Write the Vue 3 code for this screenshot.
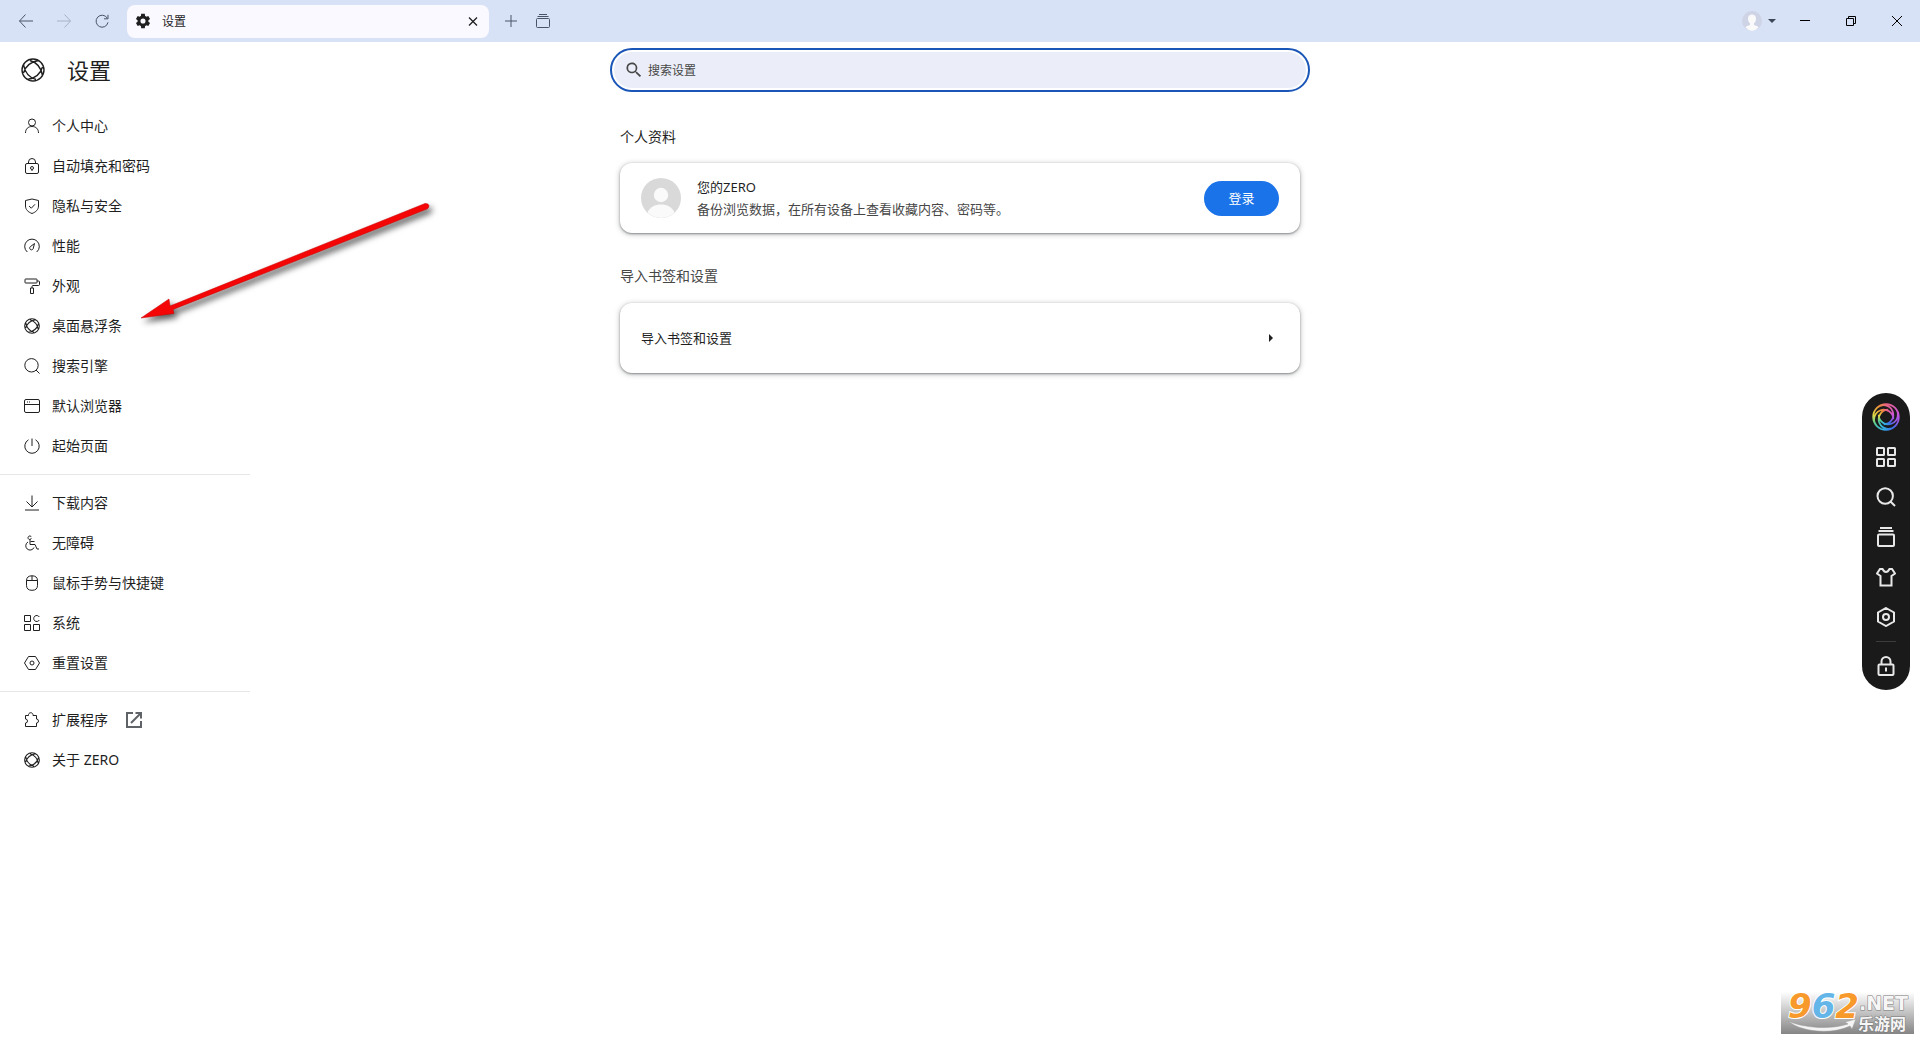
<template>
  <div class="browser">
    <header class="title-bar">
      <div class="nav-buttons">
        <button class="bar-button" aria-label="后退">
          <svg class="icon-16" viewBox="0 0 16 16"><path d="M15 8H1.500M7.500 1.500L1.500 8l6 6.500" /></svg>
        </button>
        <button class="bar-button disabled" aria-label="前进">
          <svg class="icon-16" viewBox="0 0 16 16"><path d="M1 8h13.500M8.500 1.500l6 6.500-6 6.500" /></svg>
        </button>
        <button class="bar-button" aria-label="刷新">
          <svg class="icon-16" viewBox="0 0 16 16"><path d="M13.300 5.200A6 6 0 1 0 14 9.300M14 1.800v4h-4" /></svg>
        </button>
      </div>
      <div class="tab">
        <svg class="icon-16 gear" viewBox="1 1 22 22">
          <path d="M19.400 13a7.500 7.500 0 0 0 0-2l2.300-1.800-2.400-4.100-2.700 1.100a8 8 0 0 0-1.700-1L14.500 2h-5l-.4 3.200a8 8 0 0 0-1.700 1L4.700 5.100 2.300 9.200 4.600 11a7.500 7.500 0 0 0 0 2l-2.300 1.800 2.400 4.100 2.700-1.100a8 8 0 0 0 1.700 1l.4 3.200h5l.4-3.200a8 8 0 0 0 1.700-1l2.700 1.100 2.400-4.100zM12 15.500a3.500 3.500 0 1 1 0-7 3.500 3.500 0 0 1 0 7z" />
        </svg>
        <span class="tab-title">设置</span>
        <button class="tab-close" aria-label="关闭标签页">
          <svg class="icon-16" viewBox="0 0 16 16"><path d="M4 4.500l8 8M12 4.500l-8 8" /></svg>
        </button>
      </div>
      <div class="tab-actions">
        <button class="bar-button small" aria-label="新标签页">
          <svg class="icon-16" viewBox="0 0 16 16"><path d="M8 2v12M2 8h12" /></svg>
        </button>
        <button class="bar-button small" aria-label="标签页列表">
          <svg class="icon-16" viewBox="0 0 16 16"><path d="M4 1.500h8M2.500 3.500h11M2.500 5.500h11q1 0 1 1v7q0 1-1 1h-11q-1 0-1-1v-7q0-1 1-1z" /></svg>
        </button>
      </div>
      <button class="profile" aria-label="用户">
        <svg class="icon-20" viewBox="0 0 20 20">
          <circle cx="10" cy="10" r="10" fill="#cfd3e6" />
          <path d="M10 3.500c-2.600 0-4 1.800-4 4.300 0 2 .8 3.700 2 4.500v1.600c-2 .5-3.600 1.200-4.600 2.300A9.500 9.500 0 0 0 10 20a9.500 9.500 0 0 0 6.600-3.800c-1-1.100-2.600-1.800-4.600-2.300v-1.600c1.200-.8 2-2.500 2-4.500 0-2.500-1.400-4.300-4-4.300z" fill="#f8f9fd" />
        </svg>
        <span class="caret"></span>
      </button>
      <div class="window-buttons">
        <button aria-label="最小化"><svg class="icon-10" viewBox="0 0 10 10"><path d="M0 4.500h10" /></svg></button>
        <button aria-label="还原"><svg class="icon-10" viewBox="0 0 10 10"><path d="M.5 2.500h7v7h-7zM2.500 2.500v-2h7v7h-2" /></svg></button>
        <button aria-label="关闭"><svg class="icon-10" viewBox="0 0 10 10"><path d="M0 0l10 10M10 0L0 10" /></svg></button>
      </div>
    </header>

    <div class="page">
      <aside class="sidebar">
        <div class="brand">
          <svg class="icon-24" viewBox="-12 -12 24 24">
            <path :d="logoPath" stroke-width="1.400" />
          </svg>
          <h1>设置</h1>
        </div>
        <nav>
          <ul v-for="(group, index) in menuGroups" :key="index" class="menu-group">
            <li v-for="item in group" :key="item.label">
              <a href="#" class="menu-item">
                <svg v-if="item.icon === 'logo'" class="icon-16" viewBox="-12 -12 24 24"><path :d="logoPath" stroke-width="1.600" /></svg>
                <svg v-else class="icon-16" viewBox="0 0 16 16"><path :d="icons[item.icon]" /></svg>
                <span>{{ item.label }}</span>
                <svg v-if="item.external" class="icon-16 external" viewBox="0 0 16 16">
                  <path d="M7 1H1v14h14V9M9.500 1H15v5.500M15 1L5 11" />
                </svg>
              </a>
            </li>
          </ul>
        </nav>
      </aside>

      <main class="content">
        <label class="search">
          <svg class="icon-20 search-icon" viewBox="0 0 24 24">
            <path d="M15.500 14h-.8l-.3-.3A6.500 6.500 0 1 0 13.700 14.400l.3.300v.8l5 5 1.500-1.500zM9.500 14a4.500 4.500 0 1 1 0-9 4.500 4.500 0 0 1 0 9z" />
          </svg>
          <input v-model="keyword" type="search" placeholder="搜索设置" aria-label="搜索设置" />
        </label>

        <section>
          <h2>个人资料</h2>
          <div class="card">
            <svg class="icon-40" viewBox="0 0 40 40">
              <circle cx="20" cy="20" r="20" fill="#d9d9d9" />
              <circle cx="20" cy="17" r="7.200" fill="#fafafa" />
              <path d="M6.500 34.500C9 29 14 26.500 20 26.500S31 29 33.500 34.500A20 20 0 0 1 20 40 20 20 0 0 1 6.500 34.500z" fill="#fafafa" />
            </svg>
            <div class="profile-text">
              <div>您的ZERO</div>
              <div class="secondary">备份浏览数据，在所有设备上查看收藏内容、密码等。</div>
            </div>
            <button class="login">登录</button>
          </div>
        </section>

        <section>
          <h2 class="secondary">导入书签和设置</h2>
          <button class="card link-card">
            <span>导入书签和设置</span>
            <span class="arrow-right"></span>
          </button>
        </section>
      </main>
    </div>

    <svg class="pointer" viewBox="0 0 310 140">
      <path d="M11 128L39 109l1 7L295 13.500q3-.5 4 2 0 2.500-2 3.500L43 119.500l1 4z" />
    </svg>

    <div class="float-bar">
      <button aria-label="ZERO">
        <svg class="icon-28" viewBox="-12 -12 24 24">
          <mask id="ring" maskUnits="userSpaceOnUse" x="-12" y="-12" width="24" height="24">
            <path :d="swirlPath" stroke="#fff" />
          </mask>
          <foreignObject x="-12" y="-12" width="24" height="24" mask="url(#ring)">
            <div class="rainbow"></div>
          </foreignObject>
        </svg>
      </button>
      <button v-for="tool in tools" :key="tool.icon" :aria-label="tool.label">
        <svg class="icon-20" viewBox="0 0 20 20"><path :d="toolIcons[tool.icon]" /></svg>
      </button>
      <hr />
      <button aria-label="锁定">
        <svg class="icon-20" viewBox="0 0 20 20"><path :d="toolIcons.lock" /></svg>
      </button>
    </div>

    <svg class="watermark" viewBox="0 0 133 42">
      <defs>
        <linearGradient id="plate" x1="0" y1="0" x2="0" y2="1">
          <stop offset="0" stop-color="#fff" />
          <stop offset="1" stop-color="#858585" />
        </linearGradient>
      </defs>
      <rect width="133" height="42" fill="url(#plate)" />
      <path class="swoosh" d="M7 29c16 7 42 9 60 3l-3-2 11-3-4 10-2-3C50 43 20 40 7 29z" />
      <text class="digits" x="7" y="26">
        <tspan class="orange">9</tspan><tspan class="blue">6</tspan><tspan class="orange">2</tspan>
      </text>
      <text class="net" x="78" y="18">.NET</text>
      <text class="site" x="77" y="38">乐游网</text>
    </svg>
  </div>
</template>

<script setup>
import { ref } from 'vue';

const keyword = ref('');

// outer ring with four crossing blades
const logoPath =
  'M-11 0a11 11 0 1 0 22 0a11 11 0 1 0-22 0' +
  'M5.500-9.500Q-6.500-7.500-9.500 3' +
  'M9.500 5.500Q7.500-6.500-3-9.500' +
  'M-5.500 9.500Q6.500 7.500 9.500-3' +
  'M-9.500-5.500Q-7.500 6.500 3 9.500';

// same ring with blades winding round the centre
const swirlPath =
  'M-11 0a11 11 0 1 0 22 0a11 11 0 1 0-22 0' +
  'M7.750 7.750A8.200 8.200 0 1 1 1.950-6.250' +
  'M-7.750 7.750A8.200 8.200 0 1 1 6.250 1.950' +
  'M-7.750-7.750A8.200 8.200 0 1 1-1.950 6.250' +
  'M7.750-7.750A8.200 8.200 0 1 1-6.250-1.950';

const menuGroups = [
  [
    { icon: 'user', label: '个人中心' },
    { icon: 'lock', label: '自动填充和密码' },
    { icon: 'shield', label: '隐私与安全' },
    { icon: 'gauge', label: '性能' },
    { icon: 'roller', label: '外观' },
    { icon: 'logo', label: '桌面悬浮条' },
    { icon: 'search', label: '搜索引擎' },
    { icon: 'window', label: '默认浏览器' },
    { icon: 'power', label: '起始页面' },
  ],
  [
    { icon: 'download', label: '下载内容' },
    { icon: 'wheelchair', label: '无障碍' },
    { icon: 'mouse', label: '鼠标手势与快捷键' },
    { icon: 'grid', label: '系统' },
    { icon: 'hexagon', label: '重置设置' },
  ],
  [
    { icon: 'puzzle', label: '扩展程序', external: true },
    { icon: 'logo', label: '关于 ZERO' },
  ],
];

const icons = {
  user: 'M4.500 4.500a3.500 3.500 0 1 0 7 0a3.500 3.500 0 1 0-7 0M1.500 15C1.500 11 4 8.500 8 8.500S14.500 11 14.500 15',
  lock: 'M4.500 5.500V4a3.500 3.500 0 0 1 7 0v1.500M3 5.500h10q1.500 0 1.500 1.500v7q0 1.500-1.500 1.500H3q-1.500 0-1.500-1.500V7q0-1.500 1.500-1.500zM6.500 10a1.500 1.500 0 1 1 3 0a1.500 1.500 0 1 1-3 0M8 11.500v1.500',
  shield: 'M8 1l6.500 1.500v5.500c0 3.500-2.500 6-6.500 7.500-4-1.500-6.500-4-6.500-7.500V2.500zM5 8l2.300 2.200L11 6.300',
  gauge: 'M3.300 14A7.300 7.300 0 1 1 12.700 14M10.500 5.500L6.300 8.700A1.800 1.800 0 1 0 9.300 10z',
  roller: 'M1.500 1h11q.5 0 .5.500v3q0 .5-.5.500h-11q-.5 0-.5-.5v-3Q1 1 1.500 1zM13 3h1.500q1 0 1 1v2.500q0 1-1 1H9q-1 0-1 1V10M6.500 10h3v5.500h-3z',
  search: 'M.8 7.300a6.700 6.700 0 1 0 13.400 0a6.700 6.700 0 1 0-13.400 0M12 12l3.500 3.500',
  window: 'M2 1.500h12q1.500 0 1.500 1.500v10q0 1.500-1.500 1.500H2Q.5 14.500.5 13V3Q.5 1.500 2 1.500zM.5 6.500h15M3 4h1M5 4h1',
  power: 'M8 .5v7.500M4.500 1.800a7.200 7.200 0 1 0 7 0',
  download: 'M8 .5v11M2.500 6.500L8 12l5.500-5.500M1 15h14',
  wheelchair: 'M7.300 3.300a1.700 1.700 0 1 1-2.500-2q1-1 2.500.3M6 4v5.500h5l2 4.500h2M6.500 6.500h4M4 7a4.300 4.300 0 1 0 6 5.500',
  mouse: 'M8 .8q5.500 0 5.500 5v4.500q0 5-5.500 5t-5.500-5V5.800q0-5 5.500-5zM8 .8v5M2.500 5.500h11',
  grid: 'M.5.5h6v6h-6zM.5 9.500h6v6h-6zM9.500 9.500h6v6h-6zM15.300 2A3 3 0 1 0 15.300 5',
  hexagon: 'M4.500 1.500h7L15.500 8l-4 6.500h-7L.5 8zM6 8a2 2 0 1 0 4 0a2 2 0 1 0-4 0',
  puzzle: 'M1.500 3.500h3a2.300 2.300 0 1 1 4.500 0H12.500v3.500a2 2 0 1 1 0 4v3.500h-11v-3.500a2 2 0 0 0 0-4z',
};

const tools = [
  { icon: 'apps', label: '应用' },
  { icon: 'search', label: '搜索' },
  { icon: 'stack', label: '标签页' },
  { icon: 'shirt', label: '皮肤' },
  { icon: 'hexagon', label: '设置' },
];

const toolIcons = {
  apps: 'M1.500 1h6q.5 0 .5.500v6q0 .5-.5.500h-6Q1 8 1 7.500v-6Q1 1 1.500 1zM12.500 1h6q.5 0 .5.500v6q0 .5-.5.500h-6q-.5 0-.5-.5v-6q0-.5.5-.5zM1.500 12h6q.5 0 .5.500v6q0 .5-.5.500h-6q-.5 0-.5-.5v-6q0-.5.5-.5zM12.500 12h6q.5 0 .5.500v6q0 .5-.5.500h-6q-.5 0-.5-.5v-6q0-.5.5-.5z',
  search: 'M1.500 9a7.700 7.700 0 1 0 15.400 0a7.700 7.700 0 1 0-15.400 0M14.500 14.500l4.500 4.500',
  stack: 'M4 1h12M2.500 4h15M3 7.500h14q1 0 1 1V18q0 1-1 1H3q-1 0-1-1V8.500q0-1 1-1z',
  shirt: 'M6.500 2q1.500 3 3.500 3t3.500-3L16 2l3 4.500-3.500 2.500V18.500h-11V9L1 6.500 4 2z',
  hexagon: 'M10 1l8 4.500v9L10 19l-8-4.500v-9zM7 10a3 3 0 1 0 6 0a3 3 0 1 0-6 0',
  lock: 'M5.500 8.500V5.500a4.500 4.500 0 0 1 9 0v3M3.500 8.500h13q1 0 1 1V18q0 1-1 1h-13q-1 0-1-1V9.500q0-1 1-1zM10 11.500v4',
};
</script>

<style>
body {
  margin: 0;
  background: #fff;
}
</style>

<style scoped>
.browser {
  position: relative;
  min-height: 100vh;
  font-family: "Noto Sans", "Noto Sans CJK SC", sans-serif;
  font-size: 14px;
  line-height: 20px;
  color: #1f1f1f;
}

button {
  padding: 0;
  border: none;
  background: none;
  font: inherit;
  color: inherit;
}

svg {
  display: block;
  flex: none;
}

path {
  fill: none;
  stroke: currentColor;
}

.icon-10 {
  width: 10px;
  height: 10px;
}

.icon-16 {
  width: 16px;
  height: 16px;
}

.icon-20 {
  width: 20px;
  height: 20px;
}

.icon-24 {
  width: 24px;
  height: 24px;
}

.icon-28 {
  width: 28px;
  height: 28px;
}

.icon-40 {
  width: 40px;
  height: 40px;
}

.icon-20 path[fill],
.icon-40 path {
  fill: #fafafa;
  stroke: none;
}

/* title bar */
.title-bar {
  display: flex;
  align-items: center;
  height: 42px;
  background: #d8e2f6;
}

.nav-buttons {
  display: flex;
  padding: 0 6px 0 7px;
}

.bar-button {
  display: flex;
  align-items: center;
  justify-content: center;
  width: 38px;
  height: 32px;
  color: #4a5468;
}

.bar-button.small {
  width: 32px;
}

.bar-button.disabled {
  color: #a9b2c3;
}

.tab {
  display: flex;
  align-items: center;
  gap: 11px;
  width: 362px;
  height: 33px;
  padding: 0 8px;
  box-sizing: border-box;
  border-radius: 8px;
  background: #faf9ff;
  font-size: 12px;
}

.gear path {
  fill: #1f1f1f;
  stroke: none;
}

.tab-title {
  flex: 1;
  padding-top: 1px;
}

.tab-close path {
  stroke-width: 1.3;
}

.tab-actions {
  display: flex;
  flex: 1;
  padding-left: 6px;
}

.profile {
  display: flex;
  align-items: center;
  gap: 6px;
  margin-right: 6px;
}

.caret {
  border: 4px solid transparent;
  border-top-color: #3c4658;
  border-bottom: none;
}

.window-buttons {
  display: flex;
}

.window-buttons button {
  display: flex;
  align-items: center;
  justify-content: center;
  width: 46px;
  height: 42px;
  color: #000;
}

/* page */
.page {
  display: grid;
  grid-template-columns: 250px minmax(0, 1fr) 250px;
}

.brand {
  display: flex;
  align-items: center;
  gap: 22px;
  height: 56px;
  padding: 0 21px 8px;
}

.brand h1 {
  margin: 0;
  font-size: 22px;
  line-height: 32px;
  font-weight: 400;
}

.menu-group {
  margin: 0;
  padding: 0;
  list-style: none;
}

.menu-group + .menu-group {
  margin-top: 8px;
  padding-top: 8px;
  border-top: 1px solid #e6e6e6;
}

.menu-item {
  display: flex;
  align-items: center;
  gap: 12px;
  height: 40px;
  padding-left: 24px;
  color: inherit;
  text-decoration: none;
}

.external {
  margin-left: 6px;
  color: #5f6368;
}

.external path {
  stroke-width: 2;
}

.content {
  width: 100%;
  max-width: 680px;
  margin: 0 auto;
}

.search {
  display: flex;
  align-items: center;
  gap: 4px;
  height: 36px;
  margin: 6px -10px 0;
  padding: 2px 12px;
  border: 2px solid #1a56b8;
  border-radius: 22px;
  background: #ebeef8;
  box-shadow: inset 0 0 0 2px #fff;
  color: #474747;
}

.search-icon path {
  fill: #474747;
  stroke: none;
}

.search input {
  flex: 1;
  min-width: 0;
  padding: 1px 0 0;
  border: none;
  outline: none;
  background: transparent;
  font: inherit;
  font-size: 12px;
}

.search input::placeholder {
  color: #474747;
}

section h2 {
  margin: 0;
  padding: 35px 0 16px;
  font-size: 14px;
  line-height: 20px;
  font-weight: 400;
}

section + section h2 {
  padding: 33px 0 17px;
}

.secondary {
  color: #474747;
}

.card {
  display: flex;
  align-items: center;
  gap: 16px;
  width: 100%;
  min-height: 70px;
  padding: 0 21px;
  box-sizing: border-box;
  border-radius: 12px;
  background: #fff;
  box-shadow: 0 1px 2px rgba(60, 64, 67, 0.5), 0 1px 5px 1px rgba(60, 64, 67, 0.25);
  font-size: 13px;
}

.profile-text {
  flex: 1;
  line-height: 22px;
}

.login {
  width: 75px;
  height: 35px;
  border-radius: 18px;
  background: #1a73e8;
  color: #fff;
}

.link-card {
  justify-content: space-between;
  padding-right: 27px;
}

.arrow-right {
  border: 4px solid transparent;
  border-left-color: #1f1f1f;
  border-right: none;
}

/* overlays */
.pointer {
  position: absolute;
  left: 130px;
  top: 190px;
  width: 310px;
  height: 140px;
  overflow: visible;
  pointer-events: none;
  filter: drop-shadow(3px 4px 3px rgba(0, 0, 0, 0.65));
}

.pointer path {
  fill: #f40606;
  stroke: #c80000;
  stroke-width: 0.5;
}

.float-bar {
  position: absolute;
  top: 393px;
  right: 10px;
  display: flex;
  flex-direction: column;
  align-items: center;
  width: 48px;
  padding: 4px 0;
  box-sizing: border-box;
  border-radius: 24px;
  background: #1a1a1a;
  color: #e8e8e8;
}

.float-bar button {
  display: flex;
  align-items: center;
  justify-content: center;
  width: 40px;
  height: 40px;
}

.float-bar path {
  stroke-width: 2;
}

.float-bar mask path {
  stroke-width: 1.5;
}

.float-bar hr {
  width: 20px;
  margin: 4px 0;
  border: none;
  border-top: 1px solid #3c3c3c;
}

.rainbow {
  width: 24px;
  height: 24px;
  background: conic-gradient(#ff6a8a, #e05ce8 70deg, #a55cff 110deg, #3d7bff 150deg, #35c8f5 200deg, #5fe0a0 240deg, #f7ee4a 280deg, #ff9a3c 325deg, #ff6a8a);
}

.watermark {
  position: absolute;
  right: 6px;
  bottom: 6px;
  width: 133px;
  height: 42px;
  overflow: visible;
}

.swoosh {
  fill: #f4f4f4;
  stroke: #999;
  stroke-width: 0.5;
}

.digits {
  font: italic bold 34px "DejaVu Sans", sans-serif;
  stroke: #fff;
  stroke-width: 2px;
  paint-order: stroke;
}

.orange {
  fill: #f8992c;
}

.blue {
  fill: #64b5e8;
}

.net,
.site {
  fill: #f6f6f6;
  stroke: #777;
  stroke-width: 1px;
  paint-order: stroke;
}

.net {
  font: bold 19px "DejaVu Sans", sans-serif;
}

.site {
  font: bold 16px "Noto Sans CJK SC", sans-serif;
}
</style>
